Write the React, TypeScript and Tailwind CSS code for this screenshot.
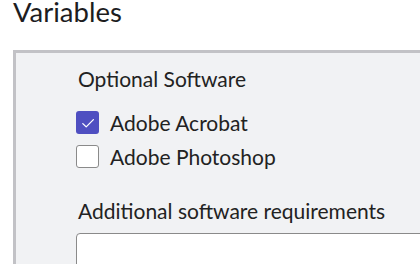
import { useState } from "react";

function Check({ checked, label, onToggle }: { checked: boolean; label: string; onToggle: () => void }) {
    return (
        <label className="flex items-center gap-[11px] h-[34px] cursor-pointer" onClick={onToggle}>
            <span
                className={
                    checked
                        ? "w-[23px] h-[23px] rounded-[3px] bg-[#4f4fc1] flex items-center justify-center"
                        : "w-[23px] h-[23px] rounded-[3px] bg-white border border-[#8a8a8a]"
                }
            >
                {checked && (
                    <svg width="16" height="16" viewBox="0 0 16 16" fill="none">
                        <path d="M2.8 8.6l3.4 3.3L13.4 4.6" stroke="white" strokeWidth="1.3" strokeLinecap="round" strokeLinejoin="round" />
                    </svg>
                )}
            </span>
            <span className="text-[21px] text-[#222]">{label}</span>
        </label>
    );
}

export default function App() {
    const [acrobat, setAcrobat] = useState(true);
    const [photoshop, setPhotoshop] = useState(false);

    return (
        <div className="w-[420px] h-[264px] overflow-hidden bg-white font-['Lato',sans-serif]">
            <h1 className="ml-[13px] text-[27.5px] leading-[24px] text-[#1d1d1f]">Variables</h1>
            <div className="mt-[26px] ml-[13px] w-[500px] h-[300px] border-t-[3px] border-l-[3px] border-[#c2c2c6] bg-[#f1f2f4] pl-[62px] pt-[10px]">
                <p className="text-[21px] text-[#222]">Optional Software</p>
                <div className="mt-[11px] -ml-[2px] flex flex-col">
                    <Check checked={acrobat} label="Adobe Acrobat" onToggle={() => setAcrobat(!acrobat)} />
                    <Check checked={photoshop} label="Adobe Photoshop" onToggle={() => setPhotoshop(!photoshop)} />
                </div>
                <p className="mt-[21px] text-[21px] text-[#222]">Additional software requirements</p>
                <textarea className="block mt-[7px] -ml-[2px] w-[420px] h-[80px] bg-white border border-[#8a8a8a] rounded-[4px] outline-none" />
            </div>
        </div>
    );
}
